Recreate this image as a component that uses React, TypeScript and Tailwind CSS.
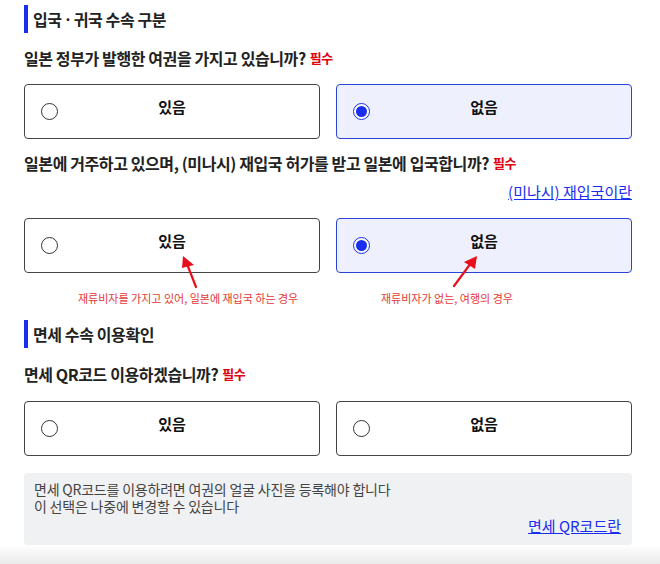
import { useState } from 'react'

type Choice = 'yes' | 'no' | null

function SectionTitle({ children }: { children: React.ReactNode }) {
    return (
        <div className="flex h-7 items-stretch">
            <div className="w-1 bg-[#1a2ef0]" />
            <h2 className="ml-[5px] flex items-center text-[16px] font-bold tracking-[-0.4px] text-[#222]">{children}</h2>
        </div>
    )
}

function Question({ children }: { children: React.ReactNode }) {
    return (
        <p className="flex h-6 items-center gap-1 text-[16px] font-bold tracking-[-0.4px] text-[#222]">
            <span>{children}</span>
            <span className="text-[13px] text-[#e0000f]">필수</span>
        </p>
    )
}

function Radio({ checked }: { checked: boolean }) {
    return checked ? (
        <span className="flex h-[17px] w-[17px] items-center justify-center rounded-full border-[1.5px] border-[#1a2ef0] bg-white">
            <span className="h-[11px] w-[11px] rounded-full bg-[#1a2ef0]" />
        </span>
    ) : (
        <span className="h-[17px] w-[17px] rounded-full border border-[#333] bg-white" />
    )
}

function OptionCard({ label, checked, onClick }: { label: string; checked: boolean; onClick: () => void }) {
    return (
        <button
            onClick={onClick}
            className={
                checked
                    ? 'relative flex h-[55px] items-center rounded-[4px] border border-[#2a44d8] bg-[#eef1fd] pl-4'
                    : 'relative flex h-[55px] items-center rounded-[4px] border border-[#444] bg-white pl-4'
            }
        >
            <Radio checked={checked} />
            <span className="absolute inset-x-0 top-[11px] text-center text-[15px] leading-[22px] font-bold text-[#111]">{label}</span>
        </button>
    )
}

function YesNo({ value, onChange }: { value: Choice; onChange: (v: Choice) => void }) {
    return (
        <div className="grid grid-cols-2 gap-4">
            <OptionCard label="있음" checked={value === 'yes'} onClick={() => onChange('yes')} />
            <OptionCard label="없음" checked={value === 'no'} onClick={() => onChange('no')} />
        </div>
    )
}

export default function App() {
    const [passport, setPassport] = useState<Choice>('no')
    const [reentry, setReentry] = useState<Choice>('no')
    const [qr, setQr] = useState<Choice>(null)

    return (
        <div className="h-[564px] w-[660px] overflow-hidden bg-white font-['Noto_Sans_CJK_KR','Noto_Sans',sans-serif]">
            <div className="w-[632px] pl-6 pt-[5px]">
                {/* 입국 · 귀국 */}
                <SectionTitle>
                    입국<span className="px-1 font-['Noto_Sans']">·</span>귀국 수속 구분
                </SectionTitle>
                <div className="mt-[13px]">
                    <Question>일본 정부가 발행한 여권을 가지고 있습니까?</Question>
                </div>
                <div className="mt-[14px]">
                    <YesNo value={passport} onChange={setPassport} />
                </div>

                <div className="mt-3">
                    <Question>일본에 거주하고 있으며, (미나시) 재입국 허가를 받고 일본에 입국합니까?</Question>
                </div>
                <div className="mt-[6px] flex h-[22px] justify-end">
                    <a href="#" className="text-[15px] leading-[22px] text-[#1a2ef0] underline">
                        (미나시) 재입국이란
                    </a>
                </div>
                <div className="relative mt-[15px]">
                    <YesNo value={reentry} onChange={setReentry} />
                    <div className="mt-[17px] grid h-4 grid-cols-2 gap-4 text-[11px] leading-4 text-[#e53935]">
                        <p className="pl-[54px]">재류비자를 가지고 있어, 일본에 재입국 하는 경우</p>
                        <p className="pl-[45px]">재류비자가 없는, 여행의 경우</p>
                    </div>
                    {/* arrows */}
                    <svg className="pointer-events-none absolute left-0 top-0" width="608" height="90" viewBox="0 0 608 90">
                        <g stroke="#e8101c" strokeWidth="2.2" fill="#e8101c" strokeLinecap="round">
                            <line x1="172" y1="69" x2="163" y2="46" />
                            <polygon points="159,38 170,47 158,50" stroke="none" />
                            <line x1="430" y1="68" x2="447" y2="45" />
                            <polygon points="453,38 451,51 440,44" stroke="none" />
                        </g>
                    </svg>
                </div>

                {/* 면세 */}
                <div className="mt-[14px]">
                    <SectionTitle>면세 수속 이용확인</SectionTitle>
                </div>
                <div className="mt-[14px]">
                    <Question>면세 QR코드 이용하겠습니까?</Question>
                </div>
                <div className="mt-[15px]">
                    <YesNo value={qr} onChange={setQr} />
                </div>

                <div className="mt-[17px] flex h-[72px] flex-col rounded-[4px] bg-[#f0f1f3] pl-[10px] pr-[11px] pt-2">
                    <p className="text-[14px] leading-[17px] tracking-[-0.2px] text-[#444]">
                        면세 QR코드를 이용하려면 여권의 얼굴 사진을 등록해야 합니다
                    </p>
                    <p className="text-[14px] leading-[17px] tracking-[-0.2px] text-[#444]">이 선택은 나중에 변경할 수 있습니다</p>
                    <div className="mt-px flex justify-end">
                        <a href="#" className="text-[15px] leading-5 text-[#1a2ef0] underline">
                            면세 QR코드란
                        </a>
                    </div>
                </div>
            </div>
            <div className="h-[20px] w-full bg-gradient-to-b from-white to-[#e9e9e9]" />
        </div>
    )
}
